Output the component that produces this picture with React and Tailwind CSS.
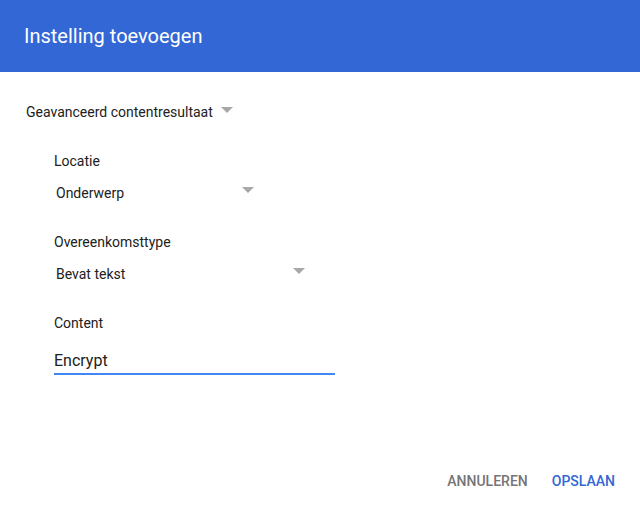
function Caret({ className = '' }) {
  return (
    <svg width="12" height="6" viewBox="0 0 12 6" className={className}>
      <path d="M0 0h12L6 6z" fill="#a8a8a8" />
    </svg>
  )
}

function Select({ value, width }) {
  return (
    <div className={`flex items-start justify-between ml-[2px] ${width}`}>
      <span className="text-[14px] leading-5 text-[#212121]">{value}</span>
      <Caret className="mt-[4px]" />
    </div>
  )
}

export default function App() {
  return (
    <div className="w-[640px] h-[507px] bg-white flex flex-col font-['Roboto',sans-serif]">
      <div className="h-[72px] bg-[#3367d6] px-6 flex items-center">
        <h1 className="text-[20px] text-white leading-7">Instelling toevoegen</h1>
      </div>

      <div className="flex-1 pl-[26px] pt-[30px]">
        <div className="flex items-start gap-2">
          <span className="text-[14px] leading-5 text-[#212121]">Geavanceerd contentresultaat</span>
          <Caret className="mt-[5px]" />
        </div>

        <div className="ml-[28px] mt-[29px]">
          <div className="text-[14px] leading-5 text-[#212121]">Locatie</div>
          <div className="mt-3">
            <Select value="Onderwerp" width="w-[198px]" />
          </div>

          <div className="mt-[29px] text-[14px] leading-5 text-[#212121]">Overeenkomsttype</div>
          <div className="mt-3">
            <Select value="Bevat tekst" width="w-[249px]" />
          </div>

          <div className="mt-[29px] text-[14px] leading-5 text-[#212121]">Content</div>
          <div className="mt-[17px] w-[281px] border-b-2 border-[#4285f4] pb-px">
            <div className="text-[16px] leading-[22px] text-[#212121]">Encrypt</div>
          </div>
        </div>
      </div>

      <div className="flex justify-end items-center gap-[24px] pr-[25px] pb-[16px]">
        <button className="text-[14px] font-medium leading-5 text-[#757575]">ANNULEREN</button>
        <button className="text-[14px] font-medium leading-5 text-[#3367d6]">OPSLAAN</button>
      </div>
    </div>
  )
}
